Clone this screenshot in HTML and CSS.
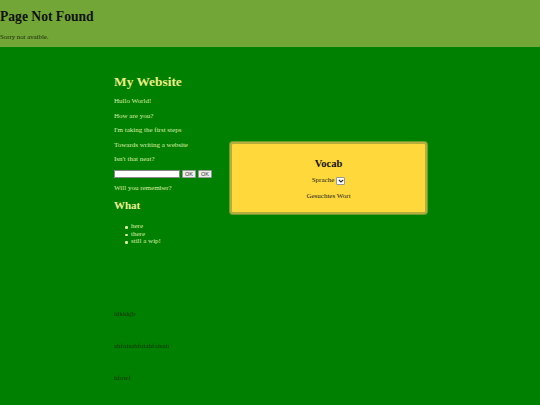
FILE: index.html
```html
<!DOCTYPE html>
<html>
<head>
<meta charset="utf-8">
<link rel="stylesheet" href="styles.css">
</head>
<body>
<header class="top">
  <h1 class="title">Page Not Found</h1>
  <p class="sorry">Sorry not avaible.</p>
</header>
<main class="main">
  <div class="col">
    <h1 class="site">My Website</h1>
    <p class="line">Hullo World!</p>
    <p class="line">How are you?</p>
    <p class="line">I'm taking the first steps</p>
    <p class="line">Towards writing a website</p>
    <p class="line">Isn't that neat?</p>
    <div class="form">
      <input class="field" type="text">
      <button class="btn">OK</button>
      <button class="btn">OK</button>
    </div>
    <p class="line">Will you remember?</p>
    <h2 class="what">What</h2>
    <ul class="list">
      <li>here</li>
      <li>there</li>
      <li>still a wip!</li>
    </ul>
    <p class="dark first">hlkkkjb</p>
    <p class="dark">ahfoisahfoiahfoisah</p>
    <p class="dark">hfowf</p>
  </div>
  <section class="vocab">
    <h2 class="vtitle">Vocab</h2>
    <div class="vrow">Sprache <span class="sel"><svg width="6" height="4" viewBox="0 0 6 4"><path d="M0.8 0.8 L3 3 L5.2 0.8" fill="none" stroke="#222" stroke-width="1.1"/></svg></span></div>
    <div class="vrow2">Gesuchtes Wort</div>
  </section>
</main>
</body>
</html>
```
FILE: styles.css
```css
html, body {
  margin: 0;
  padding: 0;
  height: 100%;
}
body {
  background: #008000;
  font-family: "Liberation Serif", "Times New Roman", serif;
}
.top {
  background: #72a637;
  height: 47px;
  overflow: hidden;
}
.title {
  margin: 0;
  padding-top: 9px;
  font-size: 13.6px;
  line-height: 16px;
  color: #111;
  font-weight: bold;
}
.sorry {
  margin: 0;
  margin-top: 8px;
  font-size: 6.8px;
  line-height: 8px;
  color: #1a2a0a;
}
.main {
  display: flex;
  align-items: flex-start;
  padding-left: 114px;
}
.col {
  width: 116px;
  padding-top: 27px;
  color: #ddeeaa;
}
.site {
  margin: 0 0 7px;
  font-size: 13.4px;
  line-height: 16px;
  color: #eeee88;
  white-space: nowrap;
}
.line {
  margin: 0 0 6.5px;
  font-size: 7px;
  line-height: 8px;
  white-space: nowrap;
}
.form {
  display: flex;
  align-items: center;
  gap: 2px;
  height: 8px;
  margin: 0 0 6.5px;
}
.field {
  width: 66px;
  height: 8px;
  box-sizing: border-box;
  border: 1px solid #888;
  background: #fff;
  margin: 0;
  padding: 0;
}
.btn {
  height: 8px;
  box-sizing: border-box;
  padding: 0 2px;
  margin: 0;
  font-family: "Liberation Sans", Arial, sans-serif;
  font-size: 5.5px;
  line-height: 6px;
  background: #eee;
  border: 1px solid #999;
  color: #333;
  border-radius: 1px;
}
.what {
  margin: 7px 0 12px;
  font-size: 11px;
  line-height: 12px;
  color: #eeee99;
}
.list {
  margin: 0;
  padding-left: 17px;
  list-style: none;
  font-size: 7px;
  line-height: 7.5px;
}
.list li {
  position: relative;
}
.list li::before {
  content: "";
  position: absolute;
  left: -6px;
  top: 3px;
  width: 2.5px;
  height: 2.5px;
  border-radius: 50%;
  background: #ddeeaa;
}
.dark {
  margin: 0 0 24px;
  font-size: 7px;
  line-height: 8px;
  color: #1a3300;
}
.first {
  margin-top: 64px;
}
.vocab {
  margin-top: 95px;
  width: 197px;
  height: 72px;
  box-sizing: border-box;
  background: #ffd83c;
  border: 2px solid #b5ad3c;
  box-shadow: 0 0 0 1px #6e9e2c;
  border-radius: 3px;
  text-align: center;
  color: #222;
}
.vtitle {
  margin: 14px 0 0;
  font-size: 10.5px;
  line-height: 12px;
  color: #111;
}
.vrow {
  margin-top: 6px;
  font-size: 7px;
  line-height: 9px;
  display: flex;
  justify-content: center;
  align-items: center;
  gap: 2px;
}
.sel {
  display: inline-flex;
  align-items: center;
  justify-content: center;
  width: 9px;
  height: 8px;
  box-sizing: border-box;
  background: #fff;
  border: 1px solid #999;
  border-radius: 1px;
}
.vrow2 {
  margin-top: 7px;
  font-size: 7px;
  line-height: 8px;
}
```
